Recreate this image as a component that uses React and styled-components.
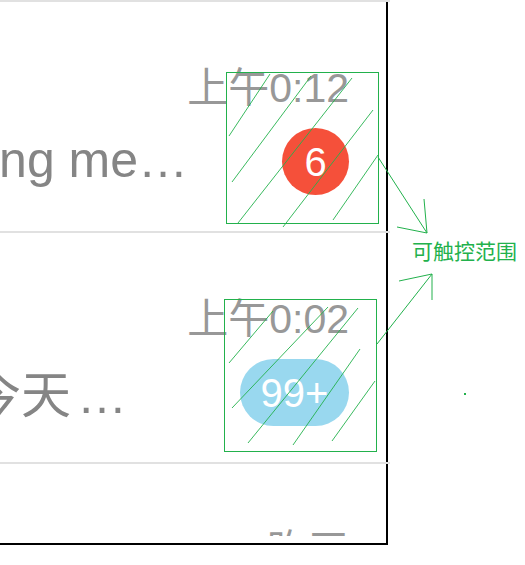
import React from 'react';
import styled, { createGlobalStyle } from 'styled-components';

const GlobalStyle = createGlobalStyle`
  html, body {
    margin: 0;
    padding: 0;
    background: #fff;
  }
  body {
    font-family: "Liberation Sans", "Noto Sans CJK SC", sans-serif;
  }
`

const Page = styled.div`
  position: relative;
  width: 525px;
  height: 565px;
  overflow: hidden;
  background: #fff;
`

const Panel = styled.div`
  width: 386px;
  height: 543px;
  border-right: 2px solid #000;
  border-bottom: 2px solid #000;
`

const List = styled.div`
  height: 536px;
  display: flex;
  flex-direction: column;
  overflow-x: visible;
  overflow-y: clip;
`

const Separator = styled.div`
  flex-shrink: 0;
  width: 390px;
  height: 2px;
  background: #e1e1e1;
`

const Row = styled.div`
  flex-shrink: 0;
  display: flex;
  width: 386px;
  height: 229px;
  padding-right: 37px;
  box-sizing: border-box;
`

const Title = styled.div`
  flex: 1;
  min-width: 0;
  overflow: hidden;
  white-space: nowrap;
  padding-top: 133px;
  font-size: 50px;
  line-height: 1;
  color: #858585;
  font-family: ${p => p.$cjk
    ? '"Noto Sans CJK SC", "Liberation Sans", sans-serif'
    : '"Liberation Sans", "Noto Sans CJK SC", sans-serif'};
`

const TitleText = styled.span`
  display: inline-block;
  margin-left: ${p => p.$shift}px;
`

const Dots = styled.span`
  margin-left: ${p => p.$gap}px;
  font-family: "Liberation Sans", sans-serif;
`

const Meta = styled.div`
  flex-shrink: 0;
  width: 160px;
  display: flex;
  flex-direction: column;
  align-items: flex-end;
  padding-top: 66px;
`

const Time = styled.div`
  font-size: 41px;
  line-height: 1;
  color: #989898;
  white-space: nowrap;
`

const Badge = styled.div`
  margin-top: 19px;
  height: 67px;
  width: ${p => p.$width}px;
  border-radius: 34px;
  background: ${p => p.$color};
  color: #fff;
  font-size: 40px;
  line-height: 1;
  display: flex;
  align-items: center;
  justify-content: center;
`

const Overlay = styled.svg`
  position: absolute;
  left: 0;
  top: 0;
  pointer-events: none;
`

const Note = styled.span`
  position: absolute;
  left: 412px;
  top: 240px;
  font-family: "Noto Sans CJK SC", sans-serif;
  font-size: 21px;
  line-height: 1;
  color: #22b14c;
  white-space: nowrap;
`

const GREEN = '#22b14c'

const hatch = [
  [229, 136, 270, 74],
  [232, 182, 311, 76],
  [238, 223, 352, 78],
  [283, 227, 373, 110],
  [333, 220, 378, 155],
  [229, 363, 273, 311],
  [232, 408, 328, 307],
  [248, 443, 358, 308],
  [293, 445, 360, 349],
  [332, 441, 375, 381],
]

const arrows = [
  [378, 157, 427, 233],
  [427, 233, 424, 199],
  [427, 233, 397, 227],
  [377, 344, 432, 274],
  [432, 274, 399, 281],
  [432, 274, 432, 300],
]

const chats = [
  { text: 'Bring me', shift: -62, gap: 0, time: '上午0:12', badge: '6', width: 67, color: '#f5503a' },
  { text: '今天', shift: -29, gap: 6, cjk: true, time: '上午0:02', badge: '99+', width: 109, color: '#99d8ef' },
  { text: '', shift: 0, time: '昨天' },
]

function TouchArea() {
  return (
    <>
      <Overlay width="525" height="565" viewBox="0 0 525 565">
        <rect x="226.5" y="72.5" width="152" height="151" fill="none" stroke={GREEN} strokeWidth="1" />
        <rect x="224.5" y="299.5" width="152" height="152" fill="none" stroke={GREEN} strokeWidth="1" />
        {hatch.map(([x1, y1, x2, y2], i) => (
          <line key={'h' + i} x1={x1} y1={y1} x2={x2} y2={y2} stroke={GREEN} strokeWidth="0.9" />
        ))}
        {arrows.map(([x1, y1, x2, y2], i) => (
          <line key={'a' + i} x1={x1} y1={y1} x2={x2} y2={y2} stroke={GREEN} strokeWidth="1" />
        ))}
        <rect x="464" y="393" width="2" height="2" fill={GREEN} />
      </Overlay>
      <Note>可触控范围</Note>
    </>
  )
}

export default function App() {
  return (
    <Page>
      <GlobalStyle />
      <Panel>
        <List>
          {chats.map((c, i) => (
            <React.Fragment key={i}>
              <Separator />
              <Row>
                <Title $cjk={c.cjk}>
                  {c.text && (
                    <TitleText $shift={c.shift}>
                      {c.text}<Dots $gap={c.gap}>…</Dots>
                    </TitleText>
                  )}
                </Title>
                <Meta>
                  <Time>{c.time}</Time>
                  {c.badge && (
                    <Badge $width={c.width} $color={c.color}>{c.badge}</Badge>
                  )}
                </Meta>
              </Row>
            </React.Fragment>
          ))}
        </List>
      </Panel>
      <TouchArea />
    </Page>
  )
}
